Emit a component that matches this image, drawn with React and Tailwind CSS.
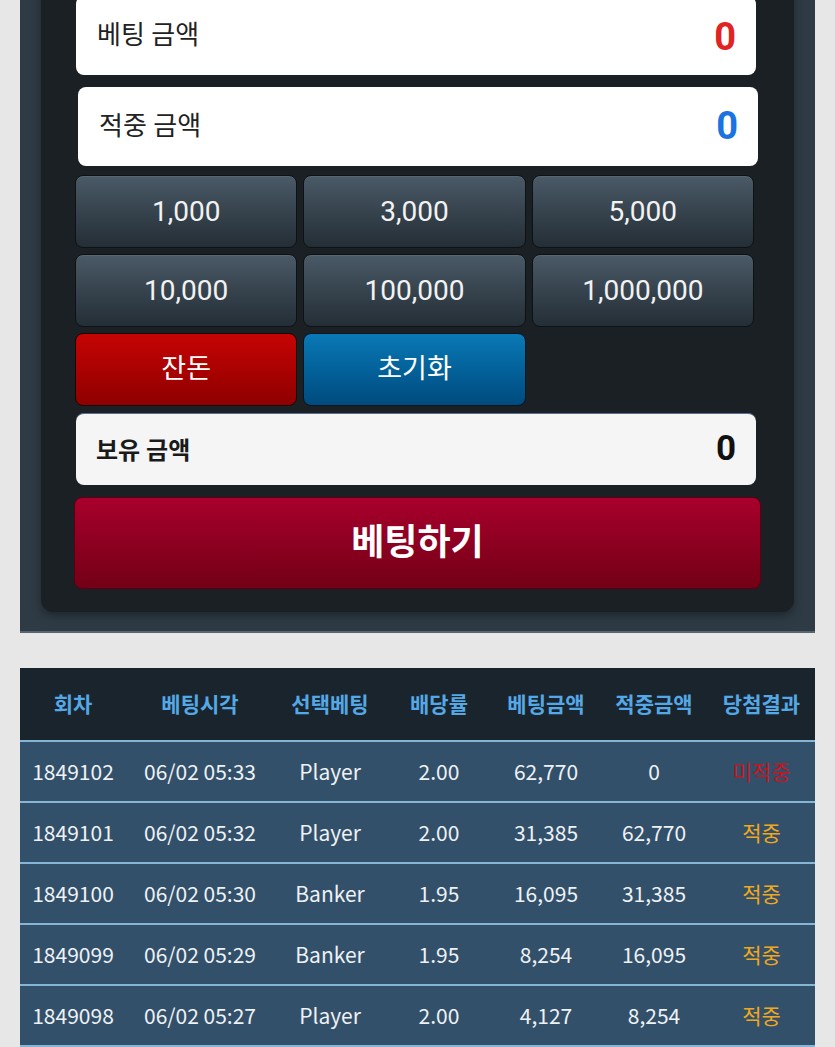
import React from "react";

const amounts = ["1,000", "3,000", "5,000", "10,000", "100,000", "1,000,000"];

const rows = [
  ["1849102", "06/02 05:33", "Player", "2.00", "62,770", "0", "미적중"],
  ["1849101", "06/02 05:32", "Player", "2.00", "31,385", "62,770", "적중"],
  ["1849100", "06/02 05:30", "Banker", "1.95", "16,095", "31,385", "적중"],
  ["1849099", "06/02 05:29", "Banker", "1.95", "8,254", "16,095", "적중"],
  ["1849098", "06/02 05:27", "Player", "2.00", "4,127", "8,254", "적중"],
];

const cols = ["w-[106px]", "w-[148px]", "w-[112px]", "w-[106px]", "w-[108px]", "w-[108px]", "w-[107px]"];
const heads = ["회차", "베팅시각", "선택베팅", "배당률", "베팅금액", "적중금액", "당첨결과"];

const darkBtn =
  "h-[73px] rounded-[8px] border border-[#0e1215] bg-gradient-to-b from-[#4a5a67] to-[#242e36] flex items-center justify-center text-[28px] text-[#f2f2f2] shadow-[inset_0_1px_0_rgba(255,255,255,0.08)]";

export default function App() {
  return (
    <div
      className="min-h-[1047px] bg-[#e7e7e7] overflow-hidden"
      style={{ fontFamily: 'Roboto, "Noto Sans CJK KR", sans-serif' }}
    >
      <div className="mx-[20px] mt-[-20px] bg-[#2e3b45] border-b-2 border-[#56656f] pb-[19px]">
        <div className="mx-[21px] bg-[#1b2025] rounded-b-[12px] shadow-[0_4px_10px_rgba(0,0,0,0.35)] pt-[16px] pb-[23px] pl-[34px] pr-[38px]">
          <div className="flex items-center justify-between h-[79px] bg-white rounded-[8px] ml-[1px] pl-[21px] pr-[20px]">
            <span className="text-[26px] text-[#222]">베팅 금액</span>
            <span className="text-[38px] font-bold text-[#e02424] pt-[3px]">0</span>
          </div>
          <div className="flex items-center justify-between h-[79px] bg-white rounded-[8px] mt-[12px] ml-[3px] mr-[-2px] pl-[21px] pr-[20px]">
            <span className="text-[26px] text-[#222]">적중 금액</span>
            <span className="text-[38px] font-bold text-[#1a73e0]">0</span>
          </div>
          <div className="grid grid-cols-3 gap-x-[6px] gap-y-[6px] mt-[9px] mr-[2px]">
            {amounts.map((a) => (
              <div key={a} className={darkBtn}>
                {a}
              </div>
            ))}
            <div className="h-[73px] rounded-[8px] border border-[#1a0505] bg-gradient-to-b from-[#c60404] to-[#8e0000] flex items-center justify-center text-[27px] text-white">
              잔돈
            </div>
            <div className="h-[73px] rounded-[8px] border border-[#071522] bg-gradient-to-b from-[#0a79b6] to-[#004b7e] flex items-center justify-center text-[27px] text-white">
              초기화
            </div>
          </div>
          <div className="flex items-center justify-between h-[72px] bg-[#f5f5f5] rounded-[8px] mt-[7px] ml-[1px] pl-[20px] pr-[20px] border-t border-[#5a6f90]">
            <span className="text-[24px] font-bold text-[#1a1a1a] pt-[2px]">보유 금액</span>
            <span className="text-[35px] font-bold text-[#111]">0</span>
          </div>
          <div className="flex items-center justify-center h-[92px] rounded-[8px] mt-[12px] ml-[-1px] mr-[-5px] border border-[#5a0010] bg-gradient-to-b from-[#a8002c] to-[#730016] text-[36px] font-bold text-white">
            베팅하기
          </div>
        </div>
      </div>

      <div
        className="mx-[20px] mt-[35px]"
        style={{ fontFamily: '"Noto Sans CJK KR", "Noto Sans", sans-serif' }}
      >
        <div className="flex h-[72px] bg-[#1a242d] items-center">
          {heads.map((h, i) => (
            <div key={h} className={`${cols[i]} text-center text-[21px] font-bold text-[#55a8e6]`}>
              {h}
            </div>
          ))}
        </div>
        {rows.map((r) => (
          <div key={r[0]} className="flex h-[61px] items-center bg-[#33506a] border-t-2 border-[#86b6d6]">
            {r.map((c, i) => (
              <div
                key={i}
                className={`${cols[i]} text-center text-[21px] ${
                  i === 6 ? (c === "미적중" ? "text-[#c8141e]" : "text-[#f0a81c]") : "text-[#eef2f5]"
                }`}
              >
                {c}
              </div>
            ))}
          </div>
        ))}
        <div className="h-[20px] bg-[#33506a] border-t-2 border-[#86b6d6]" />
      </div>
    </div>
  );
}
